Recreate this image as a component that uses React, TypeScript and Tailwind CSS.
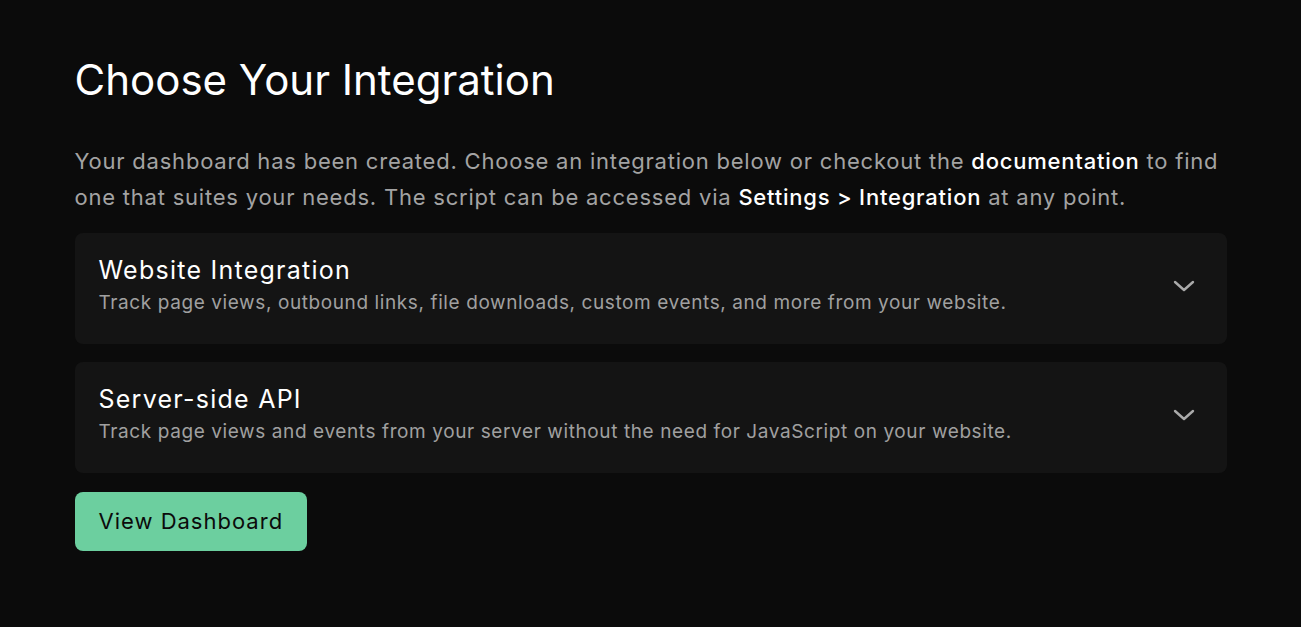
import React from "react";

type Integration = {
	title: string;
	description: string;
};

const integrations: Integration[] = [
	{
		title: "Website Integration",
		description:
			"Track page views, outbound links, file downloads, custom events, and more from your website.",
	},
	{
		title: "Server-side API",
		description:
			"Track page views and events from your server without the need for JavaScript on your website.",
	},
];

const Chevron: React.FC = () => (
	<svg width="22" height="12" viewBox="0 0 22 12" fill="none">
		<path
			d="M2 2l9 8 9-8"
			stroke="#aaaaaa"
			strokeWidth="2.4"
			strokeLinecap="round"
			strokeLinejoin="round"
		/>
	</svg>
);

const IntegrationCard: React.FC<Integration> = ({ title, description }) => (
	<div className="flex items-center justify-between rounded-lg bg-[#141414] pl-6 pr-8 pt-[21px] pb-[27px]">
		<div className="flex flex-col">
			<h3 className="text-[25px] leading-[32px] tracking-[1.25px] text-white">
				{title}
			</h3>
			<p className="mt-[3px] text-[19px] leading-[28px] tracking-[0.6px] text-[#a0a0a0]">
				{description}
			</p>
		</div>
		<Chevron />
	</div>
);

export default function App() {
	return (
		<div
			className="min-h-[627px] w-full bg-[#0b0b0b]"
			style={{ fontFamily: "Inter, 'Open Sans', sans-serif" }}
		>
			<div className="mx-auto flex max-w-[1152px] flex-col pt-[56px]">
				<h1 className="text-[42px] leading-[48px] text-white">
					Choose Your Integration
				</h1>
				<p className="mt-[39px] text-[22px] leading-[36px] tracking-[0.78px] text-[#a3a3a3]">
					Your dashboard has been created. Choose an integration below or
					checkout the <span className="font-medium text-white">documentation</span>{" "}
					to find one that suites your needs. The script can be accessed via{" "}
					<span className="font-medium text-white">Settings &gt; Integration</span>{" "}
					at any point.
				</p>
				<div className="mt-[18px] flex flex-col gap-[18px]">
					{integrations.map((item) => (
						<IntegrationCard key={item.title} {...item} />
					))}
				</div>
				<div className="mt-[19px]">
					<button className="h-[59px] rounded-lg bg-[#6ccf9f] px-6 text-[22px] tracking-[1px] text-[#0b0b0b]">
						View Dashboard
					</button>
				</div>
			</div>
		</div>
	);
}
